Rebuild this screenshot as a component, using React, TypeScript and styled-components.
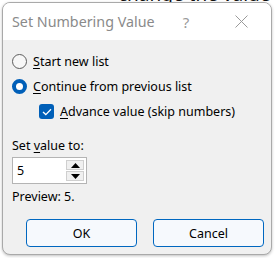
import styled, { createGlobalStyle } from 'styled-components';

const GlobalStyle = createGlobalStyle`
  html, body {
    margin: 0;
    padding: 0;
    background: #ffffff;
    font-family: 'Noto Sans', 'Open Sans', sans-serif;
  }
`;

const Desktop = styled.div`
  position: relative;
  width: 277px;
  height: 258px;
  overflow: hidden;
  padding: 2px 0 0 2px;
  box-sizing: border-box;
  white-space: nowrap;
`;

const BackdropText = styled.div`
  position: absolute;
  top: -19px;
  left: 118px;
  font-size: 19px;
  color: #111;
  z-index: 0;
`;

const Window = styled.div`
  position: relative;
  z-index: 1;
  width: 270px;
  height: 253px;
  box-sizing: border-box;
  border: 1px solid #a9a9a9;
  border-radius: 8px;
  overflow: hidden;
  background: #f0f0f0;
  box-shadow: 0 1px 3px rgba(0, 0, 0, 0.25);
  display: flex;
  flex-direction: column;
`;

const TitleBar = styled.div`
  height: 37px;
  background: #ffffff;
  display: flex;
  align-items: center;
  padding-left: 9px;
  color: #8a8a8a;
  font-size: 14.3px;
`;

const Title = styled.div`
  flex: 1;
`;

const TitleButton = styled.div<{ $w: number }>`
  width: ${({ $w }) => $w}px;
  display: flex;
  justify-content: center;
  align-items: center;
  color: #9a9a9a;
  font-size: 15px;
`;

const Body = styled.div`
  flex: 1;
  padding: 9px 9px 0 9px;
  display: flex;
  flex-direction: column;
  font-size: 12.5px;
  color: #000;
`;

const OptionRow = styled.label<{ $indent?: number }>`
  display: flex;
  align-items: center;
  height: 25px;
  gap: 6px;
  padding-left: ${({ $indent }) => $indent ?? 0}px;
`;

const Radio = styled.span<{ $on?: boolean }>`
  width: 15px;
  height: 15px;
  box-sizing: border-box;
  border-radius: 50%;
  flex: none;
  border: ${({ $on }) => ($on ? '4.5px solid #005fb8' : '1px solid #5c5c5c')};
  background: ${({ $on }) => ($on ? '#ffffff' : '#f7f7f7')};
`;

const CheckBox = styled.span`
  width: 15px;
  height: 15px;
  border-radius: 3px;
  background: #005fb8;
  flex: none;
  display: flex;
  align-items: center;
  justify-content: center;
`;

const U = styled.span`
  text-decoration: underline;
  text-underline-offset: 2px;
`;

const FieldLabel = styled.div`
  margin-top: 12px;
  line-height: 20px;
`;

const Spin = styled.div`
  margin-top: 1px;
  width: 75px;
  height: 27px;
  box-sizing: border-box;
  border: 1px solid #b4b4b4;
  background: #fff;
  display: flex;
  align-items: center;
  padding: 2px;
`;

const SpinValue = styled.div`
  flex: 1;
  padding-left: 2px;
`;

const SpinButtons = styled.div`
  width: 18px;
  height: 21px;
  display: flex;
  flex-direction: column;
  gap: 1px;
`;

const SpinButton = styled.div`
  flex: 1;
  background: #f0f0f0;
  border: 1px solid #cfcfcf;
  display: flex;
  align-items: center;
  justify-content: center;
`;

const Preview = styled.div`
  margin-top: 4px;
  line-height: 18px;
`;

const ButtonRow = styled.div`
  display: flex;
  gap: 16px;
  padding: 0 0 7px 23px;
  margin-top: auto;
`;

const Button = styled.div`
  width: 111px;
  height: 28px;
  box-sizing: border-box;
  border: 1px solid #0067c0;
  border-radius: 4px;
  background: #f6f9fd;
  display: flex;
  align-items: center;
  justify-content: center;
  font-size: 12.5px;
`;

function Arrow({ up }: { up?: boolean }) {
  return (
    <svg width="9" height="5" viewBox="0 0 9 5">
      <path d={up ? 'M0 5 L4.5 0 L9 5 Z' : 'M0 0 L4.5 5 L9 0 Z'} fill="#000" />
    </svg>
  );
}

export default function App() {
  return (
    <>
      <GlobalStyle />
      <Desktop>
        <BackdropText>change the value c</BackdropText>
        <Window>
          <TitleBar>
            <Title>Set Numbering Value</Title>
            <TitleButton $w={50}>?</TitleButton>
            <TitleButton $w={60}>
              <svg width="13" height="13" viewBox="0 0 13 13">
                <path d="M0.5 0.5 L12.5 12.5 M12.5 0.5 L0.5 12.5" stroke="#9a9a9a" strokeWidth="1" />
              </svg>
            </TitleButton>
          </TitleBar>
          <Body>
            <OptionRow>
              <Radio />
              <span>
                <U>S</U>tart new list
              </span>
            </OptionRow>
            <OptionRow>
              <Radio $on />
              <span>
                <U>C</U>ontinue from previous list
              </span>
            </OptionRow>
            <OptionRow $indent={27}>
              <CheckBox>
                <svg width="10" height="8" viewBox="0 0 10 8">
                  <path d="M1 4 L3.8 6.6 L9 1.2" stroke="#fff" strokeWidth="1.3" fill="none" />
                </svg>
              </CheckBox>
              <span>
                <U>A</U>dvance value (skip numbers)
              </span>
            </OptionRow>
            <FieldLabel>
              Set <U>v</U>alue to:
            </FieldLabel>
            <Spin>
              <SpinValue>5</SpinValue>
              <SpinButtons>
                <SpinButton>
                  <Arrow up />
                </SpinButton>
                <SpinButton>
                  <Arrow />
                </SpinButton>
              </SpinButtons>
            </Spin>
            <Preview>Preview: 5.</Preview>
          </Body>
          <ButtonRow>
            <Button>OK</Button>
            <Button>Cancel</Button>
          </ButtonRow>
        </Window>
      </Desktop>
    </>
  );
}
